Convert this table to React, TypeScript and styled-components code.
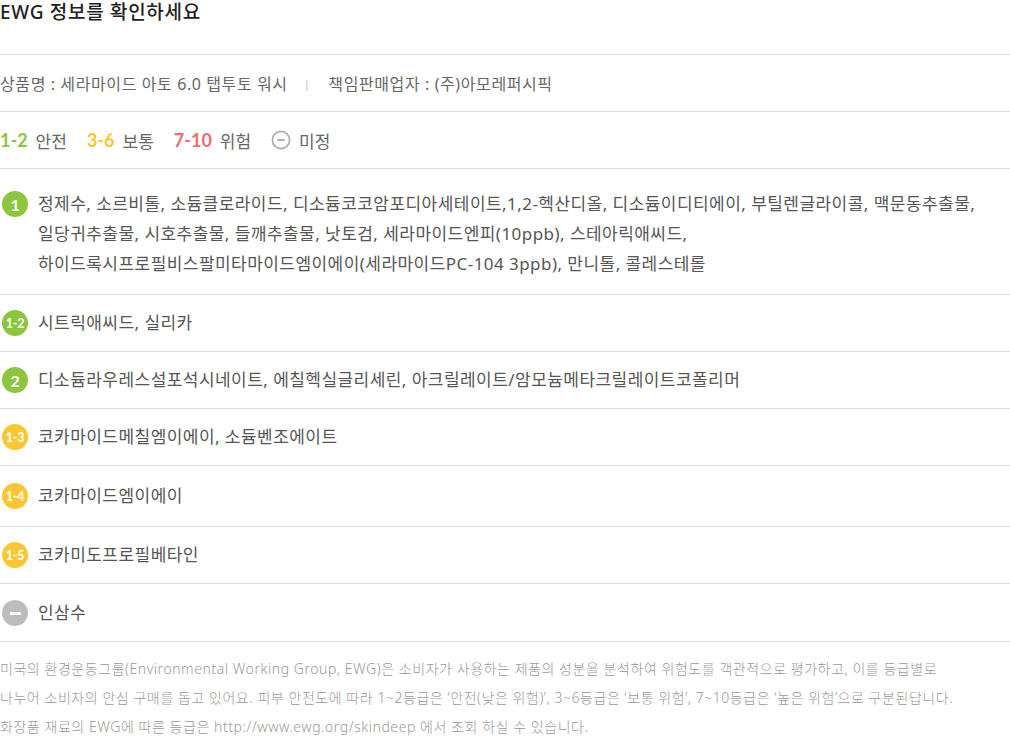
import React from 'react';
import styled, { createGlobalStyle } from 'styled-components';

const GlobalStyle = createGlobalStyle`
    body {
        margin: 0;
        background: #fff;
        font-family: 'Noto Sans', 'Noto Sans CJK KR', sans-serif;
    }
`;

const colors = {
    safe: '#8cc63f',
    normal: '#fbc631',
    danger: '#ef6b6b',
    unknown: '#bdbdbd',
    line: '#dddddd',
    text: '#555555',
};

type Grade = 'safe' | 'normal' | 'danger' | 'unknown';

const Page = styled.div`
    width: 1010px;
    color: ${colors.text};
`;

const Title = styled.h2`
    margin: 0;
    padding: 0 0 30px;
    font-size: 19px;
    line-height: 24px;
    font-weight: 500;
    letter-spacing: 0.7px;
    color: #222;
    border-bottom: 1px solid ${colors.line};
`;

const InfoRow = styled.div`
    display: flex;
    align-items: center;
    height: 56px;
    font-size: 16px;
    letter-spacing: 0.6px;
    color: #666;
    border-bottom: 1px solid ${colors.line};
`;

const Divider = styled.span`
    margin: 0 18px 0 16px;
    font-size: 11px;
    color: #bbb;
`;

const Legend = styled.div`
    display: flex;
    align-items: center;
    gap: 20px;
    height: 56px;
    font-size: 17px;
    color: #666;
    border-bottom: 1px solid ${colors.line};
`;

const LegendItem = styled.span`
    display: inline-flex;
    align-items: center;
    gap: 8px;
`;

const LegendNum = styled.span<{ $grade: Grade }>`
    font-family: 'Lato', 'Open Sans', sans-serif;
    font-weight: 700;
    font-size: 18px;
    color: ${(p) => colors[p.$grade]};
`;

const List = styled.ul`
    margin: 0;
    padding: 0;
    list-style: none;
`;

const Row = styled.li<{ $pad: string }>`
    display: flex;
    align-items: flex-start;
    gap: 10px;
    padding: ${(p) => p.$pad};
    border-bottom: 1px solid ${colors.line};
`;

const Badge = styled.span<{ $grade: Grade; $small?: boolean }>`
    flex: none;
    display: flex;
    align-items: center;
    justify-content: center;
    width: 26px;
    height: 26px;
    margin: 2px 0 0 2px;
    border-radius: 50%;
    background: ${(p) => colors[p.$grade]};
    color: #fff;
    font-family: 'Lato', 'Open Sans', sans-serif;
    font-weight: 700;
    font-size: ${(p) => (p.$small ? '12.5px' : '16px')};
    letter-spacing: -0.3px;
`;

const MinusBar = styled.span`
    width: 11px;
    height: 3px;
    border-radius: 1px;
    background: #fff;
`;

const Names = styled.p`
    margin: 0;
    font-size: 17px;
    line-height: 30px;
    letter-spacing: 0.45px;
    word-break: keep-all;
    color: #555;
`;

const Footer = styled.p`
    margin: 0;
    padding: 12px 0 0;
    font-size: 14px;
    line-height: 29px;
    font-weight: 300;
    letter-spacing: 0.55px;
    color: #999;
    white-space: nowrap;
`;

const UnknownIcon = () => (
    <svg width="20" height="20" viewBox="0 0 20 20">
        <circle cx="10" cy="10" r="8.6" fill="none" stroke="#aaa" strokeWidth="1.6" />
        <line x1="6.3" y1="10" x2="13.7" y2="10" stroke="#aaa" strokeWidth="1.8" />
    </svg>
);

const ingredients: { label: string; grade: Grade; names: string; pad?: string }[] = [
    {
        label: '1',
        grade: 'safe',
        pad: '20px 0 15px',
        names:
            '정제수, 소르비톨, 소듐클로라이드, 디소듐코코암포디아세테이트,1,2-헥산디올, 디소듐이디티에이, 부틸렌글라이콜, 맥문동추출물, 일당귀추출물, 시호추출물, 들깨추출물, 낫토검, 세라마이드엔피(10ppb), 스테아릭애씨드, 하이드록시프로필비스팔미타마이드엠이에이(세라마이드PC-104 3ppb), 만니톨, 콜레스테롤',
    },
    { label: '1-2', grade: 'safe', names: '시트릭애씨드, 실리카' },
    { label: '2', grade: 'safe', names: '디소듐라우레스설포석시네이트, 에칠헥실글리세린, 아크릴레이트/암모늄메타크릴레이트코폴리머' },
    { label: '1-3', grade: 'normal', names: '코카마이드메칠엠이에이, 소듐벤조에이트' },
    { label: '1-4', grade: 'normal', pad: '15px 0 15px', names: '코카마이드엠이에이' },
    { label: '1-5', grade: 'normal', names: '코카미도프로필베타인' },
    { label: '-', grade: 'unknown', pad: '14px 0 13px', names: '인삼수' },
];

export default function App() {
    return (
        <Page>
            <GlobalStyle />
            <Title>EWG 정보를 확인하세요</Title>
            <InfoRow>
                상품명 : 세라마이드 아토 6.0 탭투토 워시
                <Divider>|</Divider>
                책임판매업자 : (주)아모레퍼시픽
            </InfoRow>
            <Legend>
                <LegendItem>
                    <LegendNum $grade="safe">1-2</LegendNum>안전
                </LegendItem>
                <LegendItem>
                    <LegendNum $grade="normal">3-6</LegendNum>보통
                </LegendItem>
                <LegendItem>
                    <LegendNum $grade="danger">7-10</LegendNum>위험
                </LegendItem>
                <LegendItem>
                    <UnknownIcon />
                    미정
                </LegendItem>
            </Legend>
            <List>
                {ingredients.map((item) => (
                    <Row key={item.label} $pad={item.pad ?? '13px 0'}>
                        <Badge $grade={item.grade} $small={item.label.length > 1}>
                            {item.grade === 'unknown' ? <MinusBar /> : item.label}
                        </Badge>
                        <Names>{item.names}</Names>
                    </Row>
                ))}
            </List>
            <Footer>
                미국의 환경운동그룹(Environmental Working Group, EWG)은 소비자가 사용하는 제품의 성분을 분석하여 위험도를 객관적으로 평가하고, 이를 등급별로
                <br />
                나누어 소비자의 안심 구매를 돕고 있어요. 피부 안전도에 따라 1~2등급은 ‘안전(낮은 위험)’, 3~6등급은 ‘보통 위험’, 7~10등급은 ‘높은 위험’으로 구분된답니다.
                <br />
                화장품 재료의 EWG에 따른 등급은 http://www.ewg.org/skindeep 에서 조회 하실 수 있습니다.
            </Footer>
        </Page>
    );
}
